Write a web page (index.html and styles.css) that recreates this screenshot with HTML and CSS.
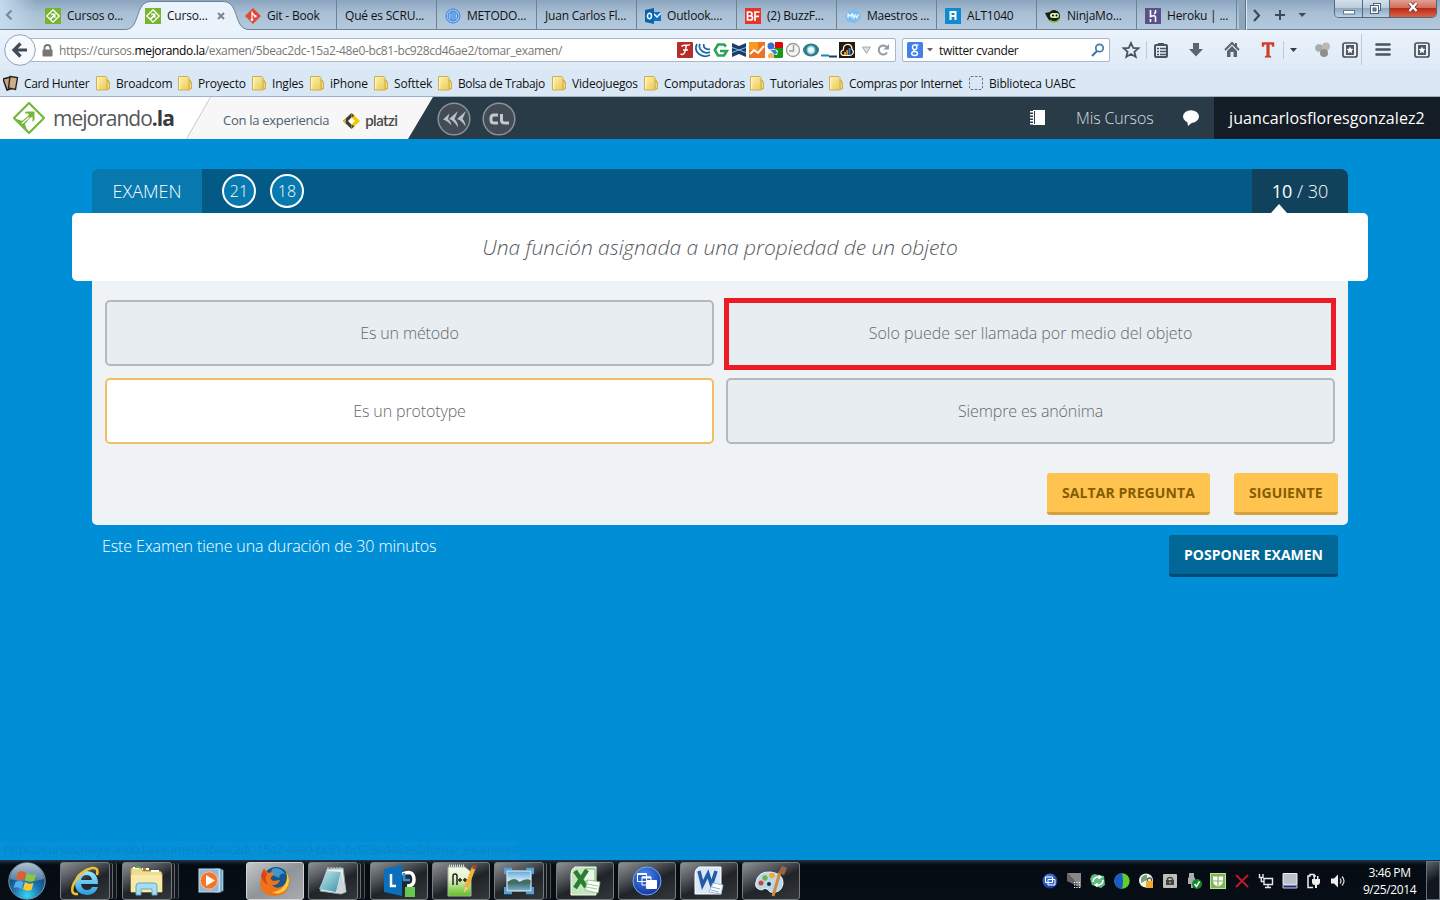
FILE: index.html
```html
<!DOCTYPE html>
<html lang="es">
<head>
<meta charset="utf-8">
<title>Cursos online - Examen</title>
<link rel="stylesheet" href="styles.css">
</head>
<body>
<svg class="defs" width="0" height="0">
  <defs>
    <linearGradient id="gFolder" x1="0" y1="0" x2="1" y2="1"><stop offset="0" stop-color="#fdf3b0"/><stop offset="1" stop-color="#e8c653"/></linearGradient>
    <radialGradient id="gOrb" cx=".5" cy=".9" r=".9"><stop offset="0" stop-color="#35d6f5"/><stop offset=".45" stop-color="#1a6ca8"/><stop offset="1" stop-color="#16324f"/></radialGradient>
    <linearGradient id="gOrbTop" x1="0" y1="0" x2="0" y2="1"><stop offset="0" stop-color="#d5e3ec"/><stop offset="1" stop-color="#5b86a6"/></linearGradient>
    <linearGradient id="gIe" x1="0" y1="0" x2="0" y2="1"><stop offset="0" stop-color="#9be8ff"/><stop offset="1" stop-color="#2a9be0"/></linearGradient>
    <linearGradient id="gGreen" x1="0" y1="0" x2="0" y2="1"><stop offset="0" stop-color="#f6fbe9"/><stop offset=".4" stop-color="#e3f3cc"/><stop offset="1" stop-color="#62bd1e"/></linearGradient>
    <linearGradient id="gSky" x1="0" y1="0" x2="0" y2="1"><stop offset="0" stop-color="#5ba6e0"/><stop offset=".5" stop-color="#d5ecf6"/><stop offset=".6" stop-color="#3f6b70"/><stop offset="1" stop-color="#7fb5cf"/></linearGradient>
    <linearGradient id="gPad" x1="0" y1="0" x2="1" y2="1"><stop offset="0" stop-color="#c6edf0"/><stop offset="1" stop-color="#3a93a3"/></linearGradient>
    <radialGradient id="gBall" cx=".4" cy=".3" r=".8"><stop offset="0" stop-color="#4c8df0"/><stop offset="1" stop-color="#0a2c9a"/></radialGradient>
    <symbol id="folder" viewBox="0 0 16 16"><path d="M.5 1.500h9.500l1 1v3h1.500v8.500l-1 1H.5z" fill="url(#gFolder)" stroke="#cdb050"/><path d="M1.700 3v11" stroke="#fff8cf" fill="none"/><path d="M11 4.500v10M12 7h1.500v6.500H12" fill="#f0d874" stroke="#d0ae48"/></symbol>
    <symbol id="fav" viewBox="0 0 16 16"><rect width="16" height="16" fill="#76b52d"/><path d="M8 1.800 14.200 8 8 14.200 1.800 8z" fill="none" stroke="#fff" stroke-width="1.300"/><path d="M5.500 5.500h5v5L8.800 9 6 12 4 10.200 7 7.200z" fill="#fff"/><path d="m5 10 3-3" stroke="#76b52d"/></symbol>
    <symbol id="album" viewBox="0 0 16 16"><rect x="1" y="1" width="14" height="14" rx="2" fill="#eef2f6" stroke="#45505d" stroke-width="1.700"/><path d="M4 3h8v10H4z" fill="#4c5866"/><path d="m8 4.500 1 2.300 2.500.2-1.900 1.700.6 2.500L8 9.900l-2.200 1.300.6-2.500L4.500 7 7 6.800z" fill="#fff"/></symbol>
  </defs>
</svg>

<div class="browser">
  <div class="tabstrip">
    <div class="scroll-left"><svg width="8" height="12" viewBox="0 0 8 12"><path d="M6.500 1.500 2 6l4.500 4.500" fill="none" stroke="#74879c" stroke-width="2"/></svg></div>
    <div class="tab plain"><svg width="16" height="16"><use href="#fav"/></svg><span>Cursos o...</span></div>
    <div class="tab active">
      <svg class="tab-shape" width="124" height="31" viewBox="0 0 124 31"><path d="M0 29.500C16 29.500 9 1.500 26 1.500H98C115 1.500 108 29.500 124 29.500V31H0z" fill="#eaf2fb"/><path d="M0 29.500C16 29.500 9 1.500 26 1.500H98C115 1.500 108 29.500 124 29.500" fill="none" stroke="#6f8396"/></svg>
      <svg class="over" width="16" height="16"><use href="#fav"/></svg><span class="over">Curso...</span>
      <svg class="over close" width="8" height="8" viewBox="0 0 8 8"><path d="m1 1 6 6M7 1 1 7" stroke="#7c858e" stroke-width="2"/></svg>
    </div>
    <div class="tab"><svg width="16" height="16" viewBox="0 0 16 16"><path d="m8 0 8 8-8 8-8-8z" fill="#de4c36"/><path d="M7 3.500V12M7 5l3 3" stroke="#fff" stroke-width="1.200"/><circle cx="7" cy="11.700" r="1.300" fill="#fff"/><circle cx="10.300" cy="8.300" r="1.300" fill="#fff"/></svg><span>Git - Book</span></div>
    <div class="tab bare"><span>Qué es SCRU...</span></div>
    <div class="tab"><svg width="16" height="16" viewBox="0 0 16 16"><circle cx="8" cy="8" r="7" fill="#9cc5f0" stroke="#3b7fe0"/><circle cx="8" cy="8" r="4.800" fill="none" stroke="#3b7fe0"/><path d="M6 4v8M8 3.500v9M10 4v8" stroke="#3b7fe0"/></svg><span>METODO...</span></div>
    <div class="tab bare"><span>Juan Carlos Fl...</span></div>
    <div class="tab"><svg width="16" height="16" viewBox="0 0 16 16"><path d="M8 4h8v9H8z" fill="#0f72c3"/><path d="m9 6 3 3 4-4" fill="none" stroke="#fff" stroke-width="1.500"/><path d="m0 2 9-2v16l-9-2z" fill="#0a64ad"/><ellipse cx="4.500" cy="8" rx="2" ry="2.700" fill="none" stroke="#fff" stroke-width="1.500"/></svg><span>Outlook....</span></div>
    <div class="tab"><svg width="16" height="16" viewBox="0 0 16 16"><rect width="16" height="16" fill="#e5352b"/><path d="M2.500 4H5q2 0 2 2T5 8H2.500h3q2 0 2 2t-2 2h-3zM10 13V4h4.500M10 8.300h4" fill="none" stroke="#fff" stroke-width="1.700"/></svg><span>(2) BuzzF...</span></div>
    <div class="tab"><svg width="16" height="16" viewBox="0 0 16 16"><path d="M3 3l7-2 5 4 1 5-6 5-7-1-3-6z" fill="#79bdf2"/><path d="M3 10V6l2 2 2-2v4M8 6l1 4 1.500-3L12 10l1.500-4" fill="none" stroke="#e6f4ff" stroke-width="1.300"/></svg><span>Maestros ...</span></div>
    <div class="tab"><svg width="16" height="16" viewBox="0 0 16 16"><rect width="16" height="16" fill="#0f8bcc"/><path d="M5.500 12V4h5v8M5.500 8h5" fill="none" stroke="#fff" stroke-width="2"/></svg><span>ALT1040</span></div>
    <div class="tab"><svg width="16" height="16" viewBox="0 0 16 16"><path d="M0 5l5-1c2-4 10-2 10 4s-7 8-11 4L2 9z" fill="#17210f"/><path d="M5 12c3 3 8 2 9-1" stroke="#76b82a" stroke-width="1.500" fill="none"/><rect x="5" y="5" width="9" height="5" rx="2.500" fill="#d9f3bd"/><circle cx="8" cy="7.500" r="1"/><circle cx="11.500" cy="7.500" r="1"/></svg><span>NinjaMo...</span></div>
    <div class="tab"><svg width="16" height="16" viewBox="0 0 16 16"><rect width="16" height="16" fill="#59518a"/><path d="M5.500 2v6.500q5-2 5 1V14M10.500 2v2.500L9 6M5.500 11v3" stroke="#fff" stroke-width="1.600" fill="none"/></svg><span>Heroku | ...</span></div>
    <div class="strip-end">
      <svg width="70" height="30" viewBox="0 0 70 30"><path d="M2 0h8v30H2z" fill="#8fa5ba"/><path d="M9.500 0v30" stroke="#dce8f4"/><path d="M8.500 0v30" stroke="#5e7388"/><path d="m17 10 5 5.500-5 5.500" fill="none" stroke="#3e4a57" stroke-width="2.200"/><path d="M38 15h10M43 10v10" stroke="#3e4a57" stroke-width="2"/><path d="M61.500 13h7.500l-3.800 4z" fill="#3e4a57"/></svg>
    </div>
    <div class="window-controls">
      <i class="wc"><svg width="12" height="12"><rect x=".5" y="7.500" width="11" height="3.500" fill="#fff" stroke="#63778b"/></svg></i>
      <i class="wc mid"><svg width="14" height="14"><rect x="4.500" y="1.500" width="7" height="7" fill="#fff" stroke="#4e6276"/><rect x="1.500" y="3.500" width="8" height="8" fill="#fff" stroke="#4e6276"/><rect x="4" y="6" width="3" height="3" fill="#7a90a5" stroke="#4e6276"/></svg></i>
      <i class="wc red"><svg width="14" height="12"><path d="m3.500 2 7 8M10.500 2l-7 8" stroke="#703531" stroke-width="4"/><path d="m3.500 2 7 8M10.500 2l-7 8" stroke="#fff" stroke-width="2.400"/></svg></i>
    </div>
  </div>

  <div class="navbar">
    <div class="back"><svg width="32" height="32" viewBox="0 0 32 32"><circle cx="16" cy="16" r="15.300" fill="#f7fafd" stroke="#8fa3b8"/><path d="M23 16H11M16.500 9.500 10 16l6.500 6.500" fill="none" stroke="#3f4b58" stroke-width="3.200"/></svg></div>
    <div class="urlbar">
      <svg class="lock" width="11" height="13" viewBox="0 0 11 13"><rect x=".5" y="5.500" width="10" height="7" rx="1" fill="#777"/><path d="M2.500 6V4a3 3 0 0 1 6 0v2" fill="none" stroke="#777" stroke-width="1.800"/></svg>
      <span class="url">https://cursos.<b>mejorando.la</b>/examen/5beac2dc-15a2-48e0-bc81-bc928cd46ae2/tomar_examen/</span>
      <div class="addons">
        <svg viewBox="0 0 16 16"><rect width="16" height="16" rx="1" fill="#b72d2a"/><path d="M4.500 4.500q1-1.500 4-1.200t4.500-.8M9.300 3.500q-.8 7-2.800 8.500-1.500 1-3-.3M6 8h5" fill="none" stroke="#fff" stroke-width="1.500"/></svg>
        <svg viewBox="0 0 16 16"><path d="M2 2q-3 6 2 10t11 1M5 2q-2 4 2 7t8 1M9 2q-1 3 1.500 4.500T15 7" fill="none" stroke="#1c66a8" stroke-width="1.700"/></svg>
        <svg viewBox="0 0 16 16"><path d="M13 4.500 11 2.500H5L1.800 8 5 13.500h6L13.800 9H7" fill="none" stroke="#27a556" stroke-width="2.600"/></svg>
        <svg viewBox="0 0 16 16"><path d="m1 1 7 3 7-3v14l-7-3-7 3z" fill="#1b3d67"/><path d="m1 5.500 14 5M15 5.500l-14 5" stroke="#7fc4f0"/><path d="m5.500 1 2.500 1.500L10.500 1M5.500 15 8 13.500l2.500 1.500" fill="#fff"/></svg>
        <svg viewBox="0 0 16 16"><path d="M0 0h16v16H0z" fill="#ee7423"/><path d="M0 0h9v8H0z" fill="#f59a23"/><path d="m1 12 4-4 4 3 6-7" fill="none" stroke="#fff" stroke-width="2"/></svg>
        <svg viewBox="0 0 16 16"><path d="M8 0h7l1 1v5H8z" fill="#d90a05"/><path d="M7 6h9v9l-1 1H7z" fill="#159a15"/><circle cx="4" cy="4" r="3.500" fill="#2f73d0"/><path d="M3 8q6-2 8 1l-1 4-5-1z" fill="#fff"/><path d="M3.500 8h5l2 3-3 1.500z" fill="#3c7ddd"/><circle cx="4" cy="14" r="3" fill="#f2b655"/></svg>
        <svg viewBox="0 0 16 16"><circle cx="8" cy="8" r="6.500" fill="#f4f4f4" stroke="#999" stroke-width="1.300"/><path d="M8.500 3v6H4" fill="none" stroke="#999" stroke-width="1.300"/></svg>
        <svg viewBox="0 0 16 16"><ellipse cx="8" cy="8" rx="8" ry="6.500" fill="#2b7b88"/><circle cx="8" cy="8" r="3.700" fill="#eef7fb" stroke="#8fc8d5" stroke-width="1.500"/></svg>
        <svg viewBox="0 0 16 16"><path d="M0 13.500h8" stroke="#1688b6" stroke-width="2"/><path d="M8 14.500h8" stroke="#163f5e" stroke-width="2"/></svg>
        <svg viewBox="0 0 16 16"><rect width="16" height="16" fill="#26190f"/><path d="M5 13.500Q1.500 13 2 10.500q0-2 2.500-2.500Q4 3 8 2.500q5-.5 5 5 2.500 2 .5 4.500-1 1.500-3 1.500z" fill="none" stroke="#fff" stroke-width="1.200"/><path d="M6 10v3" stroke="#e8c02f" stroke-width="1.800"/><path d="M8.200 8v5" stroke="#f08a2f" stroke-width="1.800"/><path d="M10.500 6v7" stroke="#3a88cc" stroke-width="1.800"/></svg>
      </div>
      <svg class="url-end" width="28" height="16" viewBox="0 0 28 16"><path d="M.5 5h8L4.500 11.500z" fill="#ddd" stroke="#aaa"/><path d="M25 10.500a4.500 4.500 0 1 1 0-5" fill="none" stroke="#929aa3" stroke-width="2"/><path d="M27 2v5.500h-5.500z" fill="#929aa3"/></svg>
    </div>
    <div class="search">
      <svg width="16" height="16" viewBox="0 0 16 16"><rect width="16" height="16" rx="1.500" fill="#4380e9"/><path d="M11.500 3H7.800" stroke="#fff" stroke-width="1.300"/><ellipse cx="7.700" cy="5.300" rx="2.200" ry="2.400" fill="none" stroke="#fff" stroke-width="1.400"/><path d="M7.500 7.500q-1.500 1.300.5 2" fill="none" stroke="#fff" stroke-width="1.300"/><ellipse cx="7.600" cy="11.500" rx="2.900" ry="2" fill="none" stroke="#fff" stroke-width="1.400"/></svg>
      <svg class="caret" width="6" height="4"><path d="M0 0h6L3 3.500z" fill="#666"/></svg>
      <span>twitter cvander</span>
      <svg width="14" height="14" viewBox="0 0 14 14"><circle cx="8.500" cy="5" r="3.700" fill="none" stroke="#3f78ad" stroke-width="1.700"/><path d="m6 8-5 5" stroke="#3f78ad" stroke-width="2.200"/></svg>
    </div>
    <svg class="tools" width="320" height="32" viewBox="0 0 320 32">
      <path d="m11 9 2.200 4.800 5.200.5-4 3.400 1.300 5.200-4.700-2.800-4.700 2.800 1.300-5.200-4-3.400 5.200-.5z" fill="none" stroke="#49545f" stroke-width="1.800"/>
      <path d="M26.500 7v18M163.500 7v18M241.500 0v31" stroke="#bdc9d6"/>
      <rect x="35" y="11" width="12" height="12" rx="1" fill="none" stroke="#49545f" stroke-width="2"/><path d="M38 9h6v3h-6z" fill="#49545f"/><path d="M37 14.500h2m1 0h6M37 17.500h2m1 0h6M37 20.500h2m1 0h6" stroke="#49545f" stroke-width="1.300"/>
      <path d="M73 9h6v6h4l-7 7.500L69 15h4z" fill="#5a6571"/>
      <path d="m105 16 7-7 7 7" fill="none" stroke="#59646f" stroke-width="2"/><path d="m107 17 5-5 5 5v6h-3.500v-5h-3v5H107zM115 9h2v4h-2z" fill="#59646f"/>
      <path d="M142 8.500h12v4h-1.500l-1-2.200H149.300v11.200l1.700 1v.8h-6v-.8l1.700-1V10.300h-2.200l-1 2.200H142z" fill="#cf3c27" stroke="#cf3c27" stroke-width=".5"/>
      <path d="M170 14h7l-3.500 4z" fill="#333e49"/>
      <circle cx="199" cy="14" r="3.800" fill="#aaa"/><circle cx="206" cy="12.500" r="4" fill="#bdb9b3"/><circle cx="204" cy="19" r="4" fill="#8f8f8f"/>
      <use href="#album" x="222" y="8" width="16" height="16"/>
      <path d="M256.500 10.500h13M256.500 15.500h13M256.500 20.500h13" stroke="#49545f" stroke-width="2.600" stroke-linecap="round"/>
      <use href="#album" x="294" y="8" width="16" height="16"/>
    </svg>
  </div>

  <div class="bookmarks">
    <div class="bm b1"><svg width="16" height="16" viewBox="0 0 16 16"><path d="m0 4 7-2 3 11-6 2z" fill="#c5a684" stroke="#1c1510" stroke-width="1.400"/><path d="m7 1.500 7.500 1-2 12-7-1.500z" fill="#cdae8a" stroke="#2c211a" stroke-width="1.400"/></svg><span>Card Hunter</span></div>
    <div class="bm b2"><svg width="16" height="16"><use href="#folder"/></svg><span>Broadcom</span></div>
    <div class="bm b3"><svg width="16" height="16"><use href="#folder"/></svg><span>Proyecto</span></div>
    <div class="bm b4"><svg width="16" height="16"><use href="#folder"/></svg><span>Ingles</span></div>
    <div class="bm b5"><svg width="16" height="16"><use href="#folder"/></svg><span>iPhone</span></div>
    <div class="bm b6"><svg width="16" height="16"><use href="#folder"/></svg><span>Softtek</span></div>
    <div class="bm b7"><svg width="16" height="16"><use href="#folder"/></svg><span>Bolsa de Trabajo</span></div>
    <div class="bm b8"><svg width="16" height="16"><use href="#folder"/></svg><span>Videojuegos</span></div>
    <div class="bm b9"><svg width="16" height="16"><use href="#folder"/></svg><span>Computadoras</span></div>
    <div class="bm b10"><svg width="16" height="16"><use href="#folder"/></svg><span>Tutoriales</span></div>
    <div class="bm b11"><svg width="16" height="16"><use href="#folder"/></svg><span>Compras por Internet</span></div>
    <div class="bm"><svg width="16" height="16"><rect x=".5" y="1.500" width="13" height="13" rx="1.500" fill="none" stroke="#6b7480" stroke-dasharray="2.500 1.500"/></svg><span>Biblioteca UABC</span></div>
  </div>
</div>

<header class="site-header">
  <a class="brand">
    <svg width="34" height="34" viewBox="0 0 34 34"><path d="M17 2 32 17 17 32 2 17z" fill="none" stroke="#74b73c" stroke-width="2.200" stroke-linejoin="round"/><path d="m12.500 12 1.800-1.500h8.200v8.500L20.500 21v-5l-2 .5-6 7-3-3 6.500-5.500 1-2z" fill="#74b73c"/><path d="m2.500 17.500 8 2.500 2 2 3.500 9.500z" fill="#74b73c"/><path d="m10 22.500 7-6" stroke="#fff" stroke-width="1.300"/></svg>
    <span>mejorando<b>.la</b></span>
  </a>
  <div class="powered">
    <svg class="slant" width="26" height="42" viewBox="0 0 26 42"><path d="M24.500 0 .5 42" stroke="#c9c9c9"/></svg>
    <span>Con la experiencia</span>
    <svg class="platzi" width="17" height="16" viewBox="0 0 17 16"><path d="M8.500 0 0 8l8.500 8z" fill="#3d3d3d"/><path d="M8.500 0 17 8l-8.500 8z" fill="#f4c600"/><path d="m8.500 4.500 3.500 3.500-3.500 3.500L5 8z" fill="#fff"/><path d="m0 8 2.800-2.700v5.400z" fill="#e8b900"/><path d="m8.500 0 3 2.800-3 1.700zM8.500 16l3-2.800-3-1.700z" fill="#55502c"/></svg>
    <b>platzi</b>
  </div>
  <svg class="badges" width="80" height="36" viewBox="0 0 80 36"><g fill="#424b56" stroke="#89939b" stroke-width="1.500"><circle cx="17" cy="18" r="15.800"/><circle cx="62" cy="18" r="15.800"/></g><path d="m12.500 12.500-6.500 6q4 1 8.500 6-.5-4-3.500-6.500zM21 10l-9 8q5 1.500 9 8.500 0-5.500-3.500-8.500zM29 10l-9 8q5 1.500 8.500 7.500 0-4.500-3-7.500z" fill="#b8c1c7"/><path d="M61 14h-4q-3 0-3 3v2q0 3 3 3h4M64.500 13v6q0 3 3 3h4.500" fill="none" stroke="#c1c9ce" stroke-width="3"/></svg>
  <nav class="site-nav">
    <svg width="16" height="16" viewBox="0 0 16 16"><path d="M4 0h12v15H4zM1 1h3v1.500H1zm0 3h3v1.500H1zm0 3h3v1.500H1zm0 3h3v1.500H1zm0 3h3v1.500H1z" fill="#fff"/><path d="M5.500 1v13" stroke="#283b47"/></svg>
    <span class="courses">Mis Cursos</span>
    <svg class="chat" width="16" height="16" viewBox="0 0 16 16"><ellipse cx="8" cy="6.500" rx="8" ry="6.300" fill="#fff"/><path d="m4 10 1 6 6-5z" fill="#fff"/></svg>
    <span class="user">juancarlosfloresgonzalez2</span>
  </nav>
</header>

<main class="page">
  <section class="exam">
    <div class="exam-head">
      <span class="label">EXAMEN</span>
      <span class="timer">21</span><span class="timer">18</span>
      <span class="progress"><b>10</b> / 30</span>
    </div>
    <h1 class="question">Una función asignada a una propiedad de un objeto</h1>
    <div class="exam-body">
      <div class="options">
        <div class="option">Es un método</div>
        <div class="option marked">Solo puede ser llamada por medio del objeto</div>
        <div class="option selected">Es un prototype</div>
        <div class="option">Siempre es anónima</div>
      </div>
      <div class="actions"><a class="btn skip">SALTAR PREGUNTA</a><a class="btn next">SIGUIENTE</a></div>
    </div>
    <footer class="exam-foot"><p>Este Examen tiene una duración de 30 minutos</p><a class="btn dark">POSPONER EXAMEN</a></footer>
  </section>
  <div class="status">https://cursos.mejorando.la/examen/5beac2dc-15a2-48e0-bc81-bc928cd46ae2/tomar_examen/#</div>
</main>

<div class="taskbar">
  <svg class="orb" width="40" height="38" viewBox="0 0 40 38"><circle cx="20" cy="19" r="18.200" fill="url(#gOrb)" stroke="#789bb5"/><path d="M3 17a17 16 0 0 1 34 0q-17 5-34 0z" fill="url(#gOrbTop)" opacity=".8"/><path d="M11 10q5-2 8 1l-2 7q-4-2-8 0z" fill="#e65b28"/><path d="M20 11q4 3 9 1l-2 7q-5 2-9-1z" fill="#8dc63f"/><path d="M8.500 20q4-2 8 0l-2 7q-4-3-8-1z" fill="#58aee8"/><path d="M18 20q4 3 8.500 1l-2 7q-5 2-8.500-1z" fill="#fac832"/></svg>
  <div class="task stacked first"><svg width="30" height="32" viewBox="0 0 30 32"><path fill-rule="evenodd" d="M28 19H11q1 6 6 6 4 0 5-3h6q-3 8-11 8Q5 29 5 18T17 6q11 1 11 13zM11 15h11q-1-5-5.500-5T11 15z" fill="url(#gIe)"/><path d="M27 10q2-8-5-7Q11 5 4 18q-5 12 4 11" fill="none" stroke="#f2c32e" stroke-width="2.500"/></svg></div>
  <div class="task stacked"><svg width="34" height="30" viewBox="0 0 34 30"><path d="M1 3q0-1 1-1h9l2 3h14q5 0 5 3v18H1z" fill="#f0dc8d" stroke="#c3a44e"/><path d="M3 2h6M12 3h7M21 5h8" stroke="#fff" stroke-width="2"/><path d="M5 1h5" stroke="#4aa74a" stroke-width="2"/><path d="M13 3h3" stroke="#db6834" stroke-width="2"/><path d="M1 9h31v17H1z" fill="#f7e9a8"/><path d="M6 29v-9q0-3 3-3h15q3 0 3 3v9h-5v-6H11v6z" fill="#a9dcf0" stroke="#5fa8cc"/></svg></div>
  <div class="task bare-task"><svg width="28" height="26" viewBox="0 0 28 26"><path d="M17 1h6v23h-6zM23 2h2v21h-2z" fill="#dbeaf5" stroke="#6799bb"/><rect x="1" y="1" width="20" height="23" fill="#8fb9d8" stroke="#c4dced"/><circle cx="11" cy="12.500" r="8.700" fill="#ef762c" stroke="#ffc08c"/><path d="m8 7 9 5.500L8 18z" fill="#fff"/></svg></div>
  <div class="task wide lit"><svg width="32" height="32" viewBox="0 0 32 32"><circle cx="17" cy="15" r="13" fill="#16578f"/><path d="M13 4q8-3 13 5-5-2-6 4l-6-3-3 3z" fill="#3b98d2"/><path d="M2 10 5 3l4 5q5-2 7 1l-4 3q-1 3 3 4l6-1q-2 6-8 5 4 5 11 1 6-5 3-14 5 5 3 13-3 11-14 11Q3 31 1 20z" fill="#ee741b"/><path d="M27 6q3 9-2 15t-12 6q8 4 14-3 6-8 0-18z" fill="#ffce36"/><path d="m2 10 3-6 3 5q-3 5 1 11-6-3-7-10z" fill="#d6461c"/></svg></div>
  <div class="task stacked"><svg width="32" height="30" viewBox="0 0 32 30"><path d="m10 3 16-1 3 24-5 2-21-3z" fill="#e8eef0" stroke="#90a3a8"/><path d="m10 5 14 1-5 20-17-3z" fill="url(#gPad)"/><path d="m24 6 5 20-10 1z" fill="#cad6d8"/><path d="M11 4V1m3 3V1m3 3V1m3 3V1m3 3V1" stroke="#c6c6c6" stroke-width="1.300"/></svg></div>
  <div class="task wide"><svg width="33" height="32" viewBox="0 0 33 32"><path d="M19 9q12-5 12 6 0 6-7 6" fill="none" stroke="#fff" stroke-width="3.500"/><path d="m1 4 18-4v31L1 27z" fill="#0a70bd"/><path d="M8 9v12h5" fill="none" stroke="#fff" stroke-width="2.500"/><path d="M21 8v7h6" fill="none" stroke="#2794db" stroke-width="2.500"/><rect x="22" y="22" width="10" height="10" fill="#62ca51"/></svg></div>
  <div class="task wide"><svg width="32" height="33" viewBox="0 0 32 33"><path d="M3 3h17l6 5v24H3z" fill="url(#gGreen)" stroke="#a3b19b"/><path d="M4 2h15" stroke="#ddd" stroke-width="3" stroke-dasharray="1 1"/><path d="M8 21v-9q0-2 2-2t2 2v9M13 16h4m-2-2v4M18 16h4m-2-2v4" fill="none" stroke="#222" stroke-width="1.500"/><path d="m29 3-8 21" stroke="#efb434" stroke-width="4"/><path d="m30 1-1 4" stroke="#a33f35" stroke-width="4"/><path d="m20 23 3 1-4 5z" fill="#efcfa0"/></svg></div>
  <div class="task stacked"><svg width="30" height="28" viewBox="0 0 30 28"><path d="M1 7V2h7M22 2h7v5M29 20v6h-7M8 26H1v-6" fill="none" stroke="#4ca3df" stroke-width="2.500"/><rect x="3" y="4" width="24" height="20" fill="url(#gSky)" stroke="#dceaf2" stroke-width="1.200"/><path d="M3.500 15q7-6 12 0 6-4 11-2v3h-23z" fill="#426f5c"/></svg></div>
  <div class="task wide"><svg width="32" height="30" viewBox="0 0 32 30"><path d="M6 1h21v28H2V8q0-5 4-7z" fill="#c5e5ba" stroke="#f7fff4"/><path d="M16 3h10v12H16" fill="#e9f6e5" stroke="#74b56a"/><path d="m6 5 11 16M18 4 6 22" stroke="#2b7d34" stroke-width="4.500"/><path d="m19 14 12 2-2 11-13-3z" fill="#fff" stroke="#8dbf86" stroke-width=".8"/><path d="m18 18 11 2m-12 1 11 2" stroke="#a3cc9c"/></svg></div>
  <div class="task wide"><svg width="30" height="30" viewBox="0 0 30 30"><circle cx="15" cy="15" r="14" fill="url(#gBall)" stroke="#7aa9ed"/><path d="M5.500 7.500h9v8h-9zM10 11h9v8h-9zM14.500 14.500h10v8h-10z" fill="#2d5fc4" stroke="#fff"/><path d="M15 16h9.500v6H15z" fill="#fff"/><path d="M5.500 8h9m-4.500 3.500h9m-4.500 3.500h10" stroke="#fff" stroke-width="2"/></svg></div>
  <div class="task wide"><svg width="32" height="30" viewBox="0 0 32 30"><path d="M6 1h22v27H2V8q0-5 4-7z" fill="#dbe7f6" stroke="#fff"/><path d="m6 5 3.500 14L15 8l3.500 11L23 5" fill="none" stroke="#235bab" stroke-width="3.500"/><path d="m20 17 10 2-2 9-12-2z" fill="#fff" stroke="#9db9de"/><path d="m19 21 8 2m-9 1 8 2" stroke="#8eadcf"/></svg></div>
  <div class="task wide"><svg width="34" height="32" viewBox="0 0 34 32"><path d="M2 17Q4 6 17 7q13 2 12 12-2 10-13 8-4-6-8-2Q0 24 2 17z" fill="#b9d8e9" stroke="#e7f4fb"/><circle cx="11" cy="13" r="2.700" fill="#6eb347"/><circle cx="18" cy="10.500" r="2.800" fill="#e8b02d"/><circle cx="7" cy="18" r="2.500" fill="#d34234"/><circle cx="15" cy="19" r="2" fill="#212c35"/><path d="m26 7-7 24" stroke="#d48a3a" stroke-width="3"/><path d="m24 8 4-7 5 2-3 7z" fill="#9a6642"/></svg></div>
  <div class="tray">
    <svg viewBox="0 0 16 16"><circle cx="8" cy="8" r="7.500" fill="url(#gBall)"/><path d="M3.500 4h7v5.500h-7zM6 6.500h7V12H6z" fill="#3c67bd" stroke="#fff"/></svg>
    <svg viewBox="0 0 16 16"><path d="M1 0h14v15z" fill="#888"/><path d="M1 0v8l14 7z" fill="#666"/><path d="M8 9.500h7M8 12h7M8 14.500h7" stroke="#fff" stroke-dasharray="1.200 1.200" stroke-width="1.200"/></svg>
    <svg viewBox="0 0 16 16"><path d="m2 2 3-1 3 1 6 1 1 9-4 3-3-1-6-2L0 6z" fill="#5fb981"/><path d="M3 9q0-5 6-5M13 7q0 5-6 5" fill="none" stroke="#fff" stroke-width="1.500"/><path d="m8.500 1.500 4 2.500-4 2.500zM7.500 9.500v5L4 12z" fill="#fff"/></svg>
    <svg viewBox="0 0 16 16"><circle cx="8" cy="8" r="7.700" fill="#5fd02b"/><path d="M8 .3a7.700 7.700 0 0 0 0 15.400q2-7 0-15.400z" fill="#1b58c9"/></svg>
    <svg viewBox="0 0 16 16"><circle cx="8" cy="7.500" r="7" fill="#eef2ec"/><path d="M3 10V5q3-4 6-3v5z" fill="#75a379"/><rect x="8" y="8" width="7" height="7" fill="#f0a929"/><path d="M9.500 8V6q2-2 4 0v2" fill="none" stroke="#655" stroke-width="1.300"/></svg>
    <svg viewBox="0 0 16 16"><rect x="1" y="1" width="14" height="14" rx="1" fill="#c0c0bb"/><rect x="4" y="7" width="8" height="5" fill="#444"/><path d="M5.500 7V5.500q2.500-2 5 0V7" fill="none" stroke="#444" stroke-width="1.400"/><path d="M7.500 8.500h1v2h-1z" fill="#ddd"/></svg>
    <svg viewBox="0 0 16 16"><path d="M3 0h5v4l1 1v6H2V5l1-1zM5 11h2v4H5z" fill="#a9adae"/><circle cx="11" cy="11" r="5" fill="#13872b"/><path d="m8.500 11 2 2.500 3-5" fill="none" stroke="#fff" stroke-width="1.500"/></svg>
    <svg viewBox="0 0 16 16"><rect x=".5" y=".5" width="15" height="15" fill="#80b553" stroke="#b9e49d"/><path d="M3 3.500h10V8q0 4-5 5.500Q3 12 3 8z" fill="#fff"/><path d="M8 3v10M3 8h10" stroke="#80b553" stroke-width="1.200"/></svg>
    <svg viewBox="0 0 16 16"><path d="m2 2 12 12M14 2 2 14" stroke="#c01b25" stroke-width="1.900"/></svg>
    <svg viewBox="0 0 16 16"><path d="M1.500 1v3.500H5V1M3.300 4.500v4H6M6 5.500h8.500v6H6zM10 12v2.500M7 14.500h6" fill="none" stroke="#e8e8e8" stroke-width="1.400"/></svg>
    <svg viewBox="0 0 16 16"><path d="M1 .5h14v11H1z" fill="#bcc0ca" stroke="#ededed"/><path d="M1 12h14v3H1z" fill="#222e7b" stroke="#ccd"/></svg>
    <svg viewBox="0 0 16 16"><path d="M7 14.500H2V3h2V1.500h4V3h2" fill="none" stroke="#eee" stroke-width="1.500"/><path d="M6 6h8v3q0 3-3 3v3H9v-3q-3 0-3-3zM7.500 3H9v3H7.500zM11 3h1.500v3H11z" fill="#eee"/></svg>
    <svg viewBox="0 0 16 16"><path d="M1 5.500h3l4-4v13l-4-4H1z" fill="#eee"/><path d="M10 5.500q2 2.500 0 5M12 3.500q4 4.500 0 9" fill="none" stroke="#ddd" stroke-width="1.200"/></svg>
  </div>
  <div class="clock"><span>3:46 PM</span><span>9/25/2014</span></div>
  <div class="show-desktop"></div>
</div>
</body>
</html>
```
FILE: styles.css
```css
* { box-sizing: border-box; }
body { margin: 0; width: 1440px; height: 900px; overflow: hidden; display: flex; flex-direction: column; font-family: "Open Sans", "Noto Sans", sans-serif; background: #008fd7; }
svg { display: block; flex: none; }
.defs { position: absolute; }

.browser { height: 97px; flex: none; font-size: 12px; color: #111; background: #dae8f6; border-bottom: 1px solid #9fb2c5; }
.tabstrip { height: 30px; display: flex; background: linear-gradient(#8ba5bf, #a8bfd5 45%, #b4c9dd); border-bottom: 1px solid #6f8396; }
.scroll-left { width: 37px; padding: 9px 0 0 5px; background: linear-gradient(90deg, #c5dbed, transparent); }
.tab { width: 100px; height: 29px; display: flex; align-items: center; gap: 6px; padding: 2px 0 0 8px; white-space: nowrap; border-right: 1px solid #6f8396; flex: none; letter-spacing: -.2px; }
.tab.plain { border: 0; }
.tab.active { position: relative; border: 0; }
.tab-shape { position: absolute; left: -12px; top: 0; }
.over { position: relative; }
.close { margin-left: 3px; }
.strip-end { width: 97px; }
.window-controls { height: 18px; width: 103px; display: flex; border: 1px solid #526a80; border-top: 0; border-radius: 0 0 5px 5px; overflow: hidden; }
.wc { width: 28px; display: flex; align-items: center; justify-content: center; background: linear-gradient(#d3e0ec, #b9cbdc 45%, #8fa9c1 50%, #b8d1e5); border-right: 1px solid #526a80; }
.wc.mid { width: 27px; }
.wc.red { flex: 1; border: 0; background: linear-gradient(#e3a091, #d0705c 45%, #ba2c17 50%, #d8624a); padding-bottom: 3px; }

.navbar { height: 40px; display: flex; align-items: center; background: linear-gradient(#eaf2fb, #deeaf7); padding-left: 4px; }
.back { width: 16px; z-index: 1; overflow: visible; }
.urlbar { width: 876px; height: 24px; display: flex; align-items: center; background: #fff; border: 1px solid #a6b8ca; border-radius: 2px; padding-left: 21px; }
.url { margin-left: 6px; width: 618px; color: #777; white-space: nowrap; letter-spacing: -.35px; }
.url b { font-weight: 400; color: #000; }
.addons { display: flex; gap: 2px; }
.addons svg { width: 16px; height: 16px; }
.url-end { margin-left: 7px; }
.search { margin-left: 6px; width: 208px; height: 24px; display: flex; align-items: center; background: #fff; border: 1px solid #a6b8ca; border-radius: 2px; padding-left: 4px; }
.caret { margin: 0 6px 0 4px; }
.search span { width: 152px; letter-spacing: -.35px; }
.tools { margin-left: 10px; }

.bookmarks { height: 26px; display: flex; padding: 0 0 0 3px; white-space: nowrap; }
.bm { display: flex; align-items: center; gap: 5px; letter-spacing: -.35px; }
.bm + .bm { gap: 4px; letter-spacing: -.2px; }
.b1 { width: 93px; } .b2 { width: 82px; } .b3 { width: 74px; } .b4 { width: 58px; }
.b5, .b6 { width: 64px; } .b7 { width: 114px; } .b8 { width: 92px; } .b9 { width: 106px; }
.b10 { width: 79px; } .b11 { width: 140px; }
.bm.b7, .bm.b11 { letter-spacing: -.4px; }

.site-header { height: 42px; flex: none; display: flex; background: #283b47; }
.brand { width: 212px; display: flex; align-items: center; padding-left: 12px; gap: 7px; background: #fff; clip-path: polygon(0 0, 100% 0, 188px 100%, 0 100%); font-size: 21px; letter-spacing: -1px; color: #54575a; z-index: 1; }
.brand b { color: #38393b; }
.powered { width: 247px; margin-left: -26px; display: flex; align-items: center; font-size: 13px; letter-spacing: -.28px; color: #4b6070; background: #f7f7f7; clip-path: polygon(0 0, 100% 0, 222px 100%, 0 100%); white-space: nowrap; z-index: 2; }
.powered .slant { margin-right: 11px; background: #fff; background: linear-gradient(120deg, #fff 50%, #f7f7f7 50%); }
.powered span, .powered b { padding-top: 3px; }
.powered .platzi { margin: 5px 5px 0 14px; }
.powered b { font: 600 15px "Lato", sans-serif; color: #4a4a4a; letter-spacing: -.55px; }
.badges { margin: 4px 0 0 4px; }
.site-nav { margin-left: auto; display: flex; align-items: center; color: #fff; font-size: 16px; }
.courses { width: 77px; margin: 0 30px 0 31px; font-weight: 300; white-space: nowrap; color: #d9dee1; letter-spacing: -.15px; }
.user { margin-left: 15px; width: 226px; height: 42px; line-height: 43px; padding-left: 15px; background: #141c25; white-space: nowrap; letter-spacing: .1px; }

.page { flex: 1; position: relative; padding: 30px 92px 0; }
.exam-head { height: 44px; display: flex; align-items: center; background: #045a86; border-radius: 8px 8px 0 0; overflow: hidden; color: #fff; font-weight: 300; font-size: 18px; }
.label { width: 110px; height: 44px; line-height: 44px; text-align: center; background: #0879ae; }
.timer { width: 34px; height: 34px; border: 2px solid #fff; border-radius: 50%; margin-left: 20px; background: #0879ae; font-size: 16px; line-height: 30px; text-align: center; }
.timer + .timer { margin-left: 14px; }
.progress { position: relative; margin-left: auto; width: 96px; height: 44px; line-height: 44px; text-align: center; background: #10425b; }
.progress b { font-weight: 400; }
.progress::after { content: ""; position: absolute; left: 19px; bottom: 0; border: 8px solid transparent; border-bottom: 9px solid #fff; border-top: 0; }
.question { margin: 0 -20px; height: 68px; line-height: 68px; background: #fff; border-radius: 5px; text-align: center; font-size: 21px; font-style: italic; font-weight: 300; color: #555b60; letter-spacing: -.04px; }
.exam-body { height: 244px; padding: 19px 13px 10px; background: #eff3f6; border-radius: 0 0 5px 5px; }
.options { display: grid; grid-template-columns: 609px 609px; gap: 12px; }
.option { position: relative; height: 66px; display: flex; align-items: center; justify-content: center; border: 2px solid #b4b9bd; border-radius: 5px; background: #e8edf1; font-size: 16px; font-weight: 300; color: #626a70; letter-spacing: -.13px; }
.option.selected { background: #fff; border-color: #f0c060; }
.option.marked { border-color: transparent; letter-spacing: 0; }
.option.marked::after { content: ""; position: absolute; inset: -4px -3px -6px -4px; border: 5px solid #ed1c24; }
.actions { display: flex; justify-content: flex-end; gap: 24px; margin: 29px -3px 0 0; }
.btn { display: block; height: 42px; line-height: 39px; padding: 0 15px; border-radius: 3px; font-size: 14px; font-weight: 700; white-space: nowrap; background: #ffc44f; border-bottom: 3px solid #d6a13c; color: #855d00; }
.btn.skip { width: 163px; letter-spacing: .08px; }
.btn.next { width: 104px; letter-spacing: .08px; }
.btn.dark { background: #006797; border-color: #004a76; color: #fff; }
.exam-foot { display: flex; justify-content: space-between; padding: 10px 10px 0; color: #fff; font-size: 16px; font-weight: 300; letter-spacing: -.12px; }
.exam-foot p { margin: 0; }
.exam-foot .btn { letter-spacing: 0; }
.status { position: absolute; left: 0; bottom: 0; width: 518px; height: 18px; padding-left: 4px; line-height: 16px; font-size: 12px; letter-spacing: -.3px; white-space: nowrap; background: #0591d8; color: #0885c8; }

.taskbar { height: 40px; flex: none; display: flex; align-items: center; background: linear-gradient(#172b3a, #050b12 4px, #080e15); border-top: 1px solid #24323d; padding-left: 7px; }
.orb { margin-right: 13px; }
.task { width: 50px; height: 38px; margin-right: 4px; display: flex; align-items: center; justify-content: center; border: 1px solid #767b80; border-radius: 3px; background: linear-gradient(155deg, #8d9194 0, #55595d 30%, #202428 55%, #34383b 100%); flex: none; }
.task.wide { width: 58px; }
.task.stacked { margin-right: 12px; box-shadow: 3px 0 0 -1px #171b20, 4px 0 0 -1px #64696e, 7px 0 0 -1px #11161b, 8px 0 0 -1px #4c5156; }
.task.bare-task { background: none; border-color: transparent; margin-left: 2px; width: 52px; margin-right: 8px; }
.task.lit { background: linear-gradient(145deg, #c6c8ca, #8f9499 50%, #a9acaf); border-color: #d2d4d5; }
.tray { margin-left: auto; display: flex; gap: 8px; }
.tray svg { width: 16px; height: 16px; }
.clock { width: 73px; margin: 0 0 0 7px; display: flex; flex-direction: column; align-items: center; color: #fff; font-size: 12px; line-height: 17px; letter-spacing: -.4px; }
.show-desktop { width: 14px; height: 39px; border: 1px solid #65717b; background: linear-gradient(150deg, #5b646c, #11171d 50%); }
```
